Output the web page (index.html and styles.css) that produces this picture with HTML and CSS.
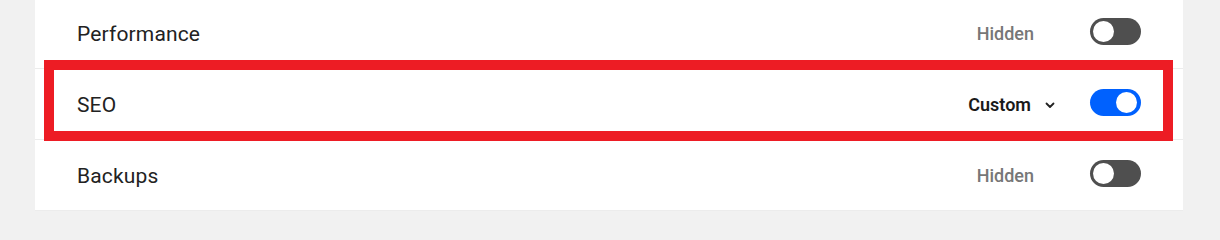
FILE: index.html
```html
<!DOCTYPE html>
<html>
<head>
<meta charset="utf-8">
<link rel="stylesheet" href="styles.css">
</head>
<body>
<div class="page">
  <div class="panel">
    <div class="row">
      <span class="label">Performance</span>
      <div class="controls">
        <span class="status">Hidden</span>
        <span class="toggle"><span class="knob"></span></span>
      </div>
    </div>
    <div class="row">
      <span class="label">SEO</span>
      <div class="controls">
        <span class="select">Custom
          <svg class="chev" width="10" height="7" viewBox="0 0 10 7"><path d="M1.5 1.5 L5 5 L8.5 1.5" fill="none" stroke="#222" stroke-width="1.8" stroke-linecap="round" stroke-linejoin="round"/></svg>
        </span>
        <span class="toggle on"><span class="knob"></span></span>
      </div>
    </div>
    <div class="row">
      <span class="label">Backups</span>
      <div class="controls">
        <span class="status">Hidden</span>
        <span class="toggle"><span class="knob"></span></span>
      </div>
    </div>
  </div>
  <div class="highlight"></div>
</div>
</body>
</html>
```

FILE: styles.css
```css
html, body {
  margin: 0;
  padding: 0;
  background: #f1f1f1;
  font-family: Roboto, "Liberation Sans", sans-serif;
  overflow: hidden;
}
.page {
  position: relative;
  width: 1220px;
  height: 213px;
}
.panel {
  margin: -2px 0 0 35px;
  width: 1148px;
  background: #fff;
}
.row {
  height: 70px;
  border-bottom: 1px solid #ececec;
  display: flex;
  align-items: center;
  justify-content: space-between;
  padding: 0 42px;
}
.label {
  font-size: 21px;
  letter-spacing: 0.15px;
  color: #222;
  margin-top: 1px;
}
.controls {
  display: flex;
  align-items: center;
  margin-top: -3px;
}
.status {
  font-size: 18px;
  font-weight: 500;
  color: #777;
  margin-right: 56px;
  margin-top: 3px;
}
.select {
  font-size: 18px;
  font-weight: 600;
  color: #1a1a1a;
  display: flex;
  align-items: center;
  margin-right: 35px;
  margin-top: 3px;
}
.chev {
  margin-left: 14px;
  margin-top: 3px;
}
.toggle {
  width: 51px;
  height: 27px;
  border-radius: 14px;
  background: #4f4f4f;
  display: flex;
  align-items: center;
  padding: 0 3px;
  box-sizing: border-box;
}
.toggle.on {
  background: #0061fe;
  justify-content: flex-end;
  padding-right: 4px;
}
.knob {
  width: 21px;
  height: 21px;
  border-radius: 50%;
  background: #fff;
}
.highlight {
  position: absolute;
  left: 44px;
  top: 62px;
  width: 1129px;
  height: 81px;
  border: 10px solid #ed1c24;
  box-sizing: border-box;
}
```
